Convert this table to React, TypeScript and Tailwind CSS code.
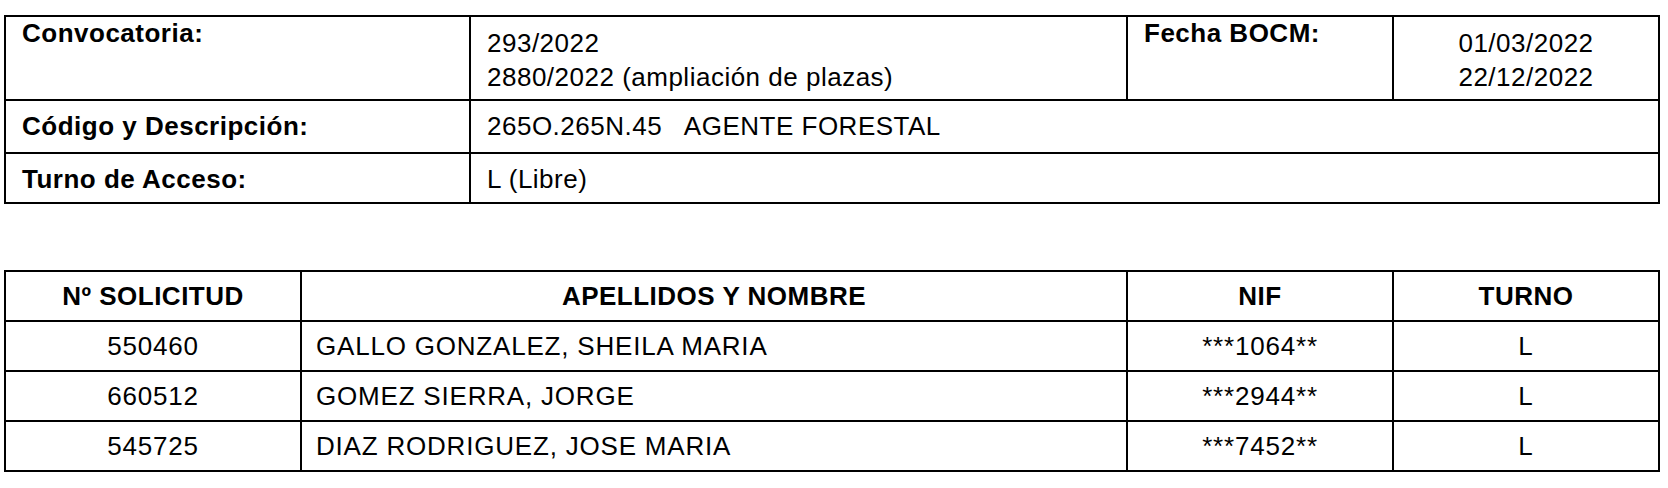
import React from 'react';

const rows = [
  { id: '550460', name: 'GALLO GONZALEZ, SHEILA MARIA', nif: '***1064**', turno: 'L' },
  { id: '660512', name: 'GOMEZ SIERRA, JORGE', nif: '***2944**', turno: 'L' },
  { id: '545725', name: 'DIAZ RODRIGUEZ, JOSE MARIA', nif: '***7452**', turno: 'L' },
];

export default function App() {
  return (
    <div className="min-h-[488px] w-[1668px] bg-white text-black text-[26px] tracking-[0.5px] font-['Liberation_Sans',Arial,sans-serif]">
      {/* Datos de la convocatoria */}
      <div className="ml-[4px] pt-[15px]">
        <div className="w-[1656px] border-2 border-black">
          <div className="grid h-[82px] grid-cols-[463px_657px_266px_266px]">
            <div className="pl-[16px] pt-[1px] font-bold leading-[30px]">Convocatoria:</div>
            <div className="border-l-2 border-black pl-[16px] pt-[9px] leading-[34px]">
              <div>293/2022</div>
              <div>2880/2022 (ampliación de plazas)</div>
            </div>
            <div className="border-l-2 border-black pl-[16px] pt-[1px] font-bold leading-[30px]">Fecha BOCM:</div>
            <div className="border-l-2 border-black pt-[9px] text-center leading-[34px]">
              <div>01/03/2022</div>
              <div>22/12/2022</div>
            </div>
          </div>
          <div className="grid h-[53px] grid-cols-[463px_1fr] border-t-2 border-black">
            <div className="flex items-center pl-[16px] font-bold">Código y Descripción:</div>
            <div className="flex items-center whitespace-pre border-l-2 border-black pl-[16px]">265O.265N.45   AGENTE FORESTAL</div>
          </div>
          <div className="grid h-[50px] grid-cols-[463px_1fr] border-t-2 border-black">
            <div className="flex items-center pl-[16px] pt-[2px] font-bold">Turno de Acceso:</div>
            <div className="flex items-center border-l-2 border-black pl-[16px] pt-[2px]">L (Libre)</div>
          </div>
        </div>
      </div>

      {/* Relación de aspirantes */}
      <div className="ml-[4px] mt-[66px]">
        <div className="w-[1656px] border-2 border-black">
          <div className="grid h-[48px] grid-cols-[294px_826px_266px_266px] items-center font-bold">
            <div className="text-center">Nº SOLICITUD</div>
            <div className="flex h-full items-center justify-center border-l-2 border-black">APELLIDOS Y NOMBRE</div>
            <div className="flex h-full items-center justify-center border-l-2 border-black">NIF</div>
            <div className="flex h-full items-center justify-center border-l-2 border-black">TURNO</div>
          </div>
          {rows.map((r) => (
            <div key={r.id} className="grid h-[50px] grid-cols-[294px_826px_266px_266px] border-t-2 border-black tracking-[0.8px]">
              <div className="flex items-center justify-center">{r.id}</div>
              <div className="flex items-center border-l-2 border-black pl-[14px]">{r.name}</div>
              <div className="flex items-center justify-center border-l-2 border-black">{r.nif}</div>
              <div className="flex items-center justify-center border-l-2 border-black">{r.turno}</div>
            </div>
          ))}
        </div>
      </div>
    </div>
  );
}
